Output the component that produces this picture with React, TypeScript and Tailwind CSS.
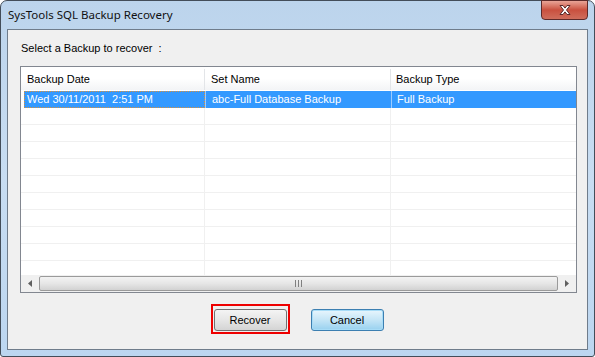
import React from "react";

const rows = [
  { date: "Wed 30/11/2011  2:51 PM", name: "abc-Full Database Backup", type: "Full Backup" },
];

const font = { fontFamily: '"Liberation Sans", Arial, sans-serif' };

function CloseIcon() {
  return (
    <svg width="16" height="12" viewBox="0 0 16 12">
      <path
        d="M3 1.5h3l2 2.6 2-2.6h3l-3.5 4.5 3.5 4.5h-3l-2-2.6-2 2.6h-3l3.5-4.5z"
        fill="#ffffff"
        stroke="#5a2a2a"
        strokeWidth="1"
        strokeLinejoin="round"
      />
    </svg>
  );
}

function ScrollBar() {
  return (
    <div className="flex h-[17px] items-stretch bg-[#f0f0f0]">
      <div className="flex w-[18px] items-center justify-center">
        <svg width="4" height="7" viewBox="0 0 4 7">
          <path d="M4 0v7L0 3.5z" fill="#606060" />
        </svg>
      </div>
      <div className="my-[1px] flex flex-1 items-center justify-center rounded-[2px] border border-[#9a9a9a] bg-gradient-to-b from-[#f3f3f3] via-[#e6e6e6] to-[#d2d2d2]">
        <div className="flex gap-[2px]">
          <div className="h-[7px] w-[1px] bg-[#808080]" />
          <div className="h-[7px] w-[1px] bg-[#808080]" />
          <div className="h-[7px] w-[1px] bg-[#808080]" />
        </div>
      </div>
      <div className="flex w-[18px] items-center justify-center">
        <svg width="4" height="7" viewBox="0 0 4 7">
          <path d="M0 0v7L4 3.5z" fill="#606060" />
        </svg>
      </div>
    </div>
  );
}

export default function App() {
  const emptyRows = Array.from({ length: 10 });
  return (
    <div className="h-[357px] w-[595px] overflow-hidden bg-white" style={font}>
      <div className="relative flex h-full w-full flex-col rounded-t-[7px] rounded-b-[3px] border border-[#434d59] bg-gradient-to-b from-[#bcd4ec] via-[#c8ddf2] to-[#bcd6f0]">
        {/* title bar */}
        <div className="flex h-[28px] items-center pl-[7px]">
          <span
            className="text-[11.5px] text-[#111]"
            style={{ fontFamily: '"Noto Sans", "Open Sans", sans-serif' }}
          >
            SysTools SQL Backup Recovery
          </span>
        </div>
        <div className="absolute right-[6px] top-[-1px] flex h-[20px] w-[47px] items-center justify-center rounded-b-[4px] border border-[#5d2a2a] bg-gradient-to-b from-[#e8a497] via-[#c9503f] to-[#cf6d5c]">
          <CloseIcon />
        </div>

        {/* client area */}
        <div className="mx-[6px] mb-[6px] flex flex-1 flex-col border border-[#6f7c8b] bg-[#f0f0f0] px-[12px] pt-[12px]">
          <div className="h-[13px] pl-[1px] text-[11px] leading-[13px] text-black">
            Select a Backup to recover&nbsp;&nbsp;:
          </div>

          {/* list view */}
          <div className="mt-[11px] flex h-[227px] w-[557px] flex-col border border-[#828790] bg-white">
            <div className="flex h-[23px] bg-gradient-to-b from-white via-white to-[#f3f4f6] pt-[2px] text-[11px] text-black">
              <div className="flex w-[184px] items-center border-r border-[#e3e5e8] pl-[6px]">Backup Date</div>
              <div className="flex w-[186px] items-center border-r border-[#e3e5e8] pl-[6px]">Set Name</div>
              <div className="flex flex-1 items-center pl-[5px]">Backup Type</div>
            </div>
            <div className="flex-1 overflow-hidden pt-[1px]">
              {rows.map((r) => (
                <div key={r.date} className="ml-[3px] flex h-[17px] whitespace-pre bg-[#3399ff] text-[11px] leading-[17px] text-white">
                  <div className="w-[181px] border border-dotted border-[#d9903a] pl-[2px] leading-[15px]">{r.date}</div>
                  <div className="w-[186px] border-l border-[#9ccbff] pl-[6px]">{r.name}</div>
                  <div className="flex-1 border-l border-[#9ccbff] pl-[5px]">{r.type}</div>
                </div>
              ))}
              {emptyRows.map((_, i) => (
                <div key={i} className="flex h-[17px] border-b border-[#f0f0f0]">
                  <div className="w-[184px] border-r border-[#f0f0f0]" />
                  <div className="w-[186px] border-r border-[#f0f0f0]" />
                  <div className="flex-1" />
                </div>
              ))}
            </div>
            <ScrollBar />
          </div>

          {/* buttons */}
          <div className="mt-[11px] flex justify-center gap-[21px] pr-[1px]">
            <div className="border-2 border-[#ee0000] p-[1px]">
              <button className="h-[22px] w-[73px] rounded-[3px] border border-[#707070] bg-gradient-to-b from-[#f4f4f4] via-[#e6e6e6] to-[#d4d4d4] text-[11px] text-black">
                Recover
              </button>
            </div>
            <div className="pt-[3px]">
              <button className="h-[22px] w-[73px] rounded-[3px] border border-[#3c7fb1] bg-gradient-to-b from-[#e8f6fd] via-[#c4e5f6] to-[#98d1ef] text-[11px] text-black shadow-[0_0_0_1px_#a7dcf7_inset]">
                Cancel
              </button>
            </div>
          </div>
        </div>
      </div>
    </div>
  );
}
